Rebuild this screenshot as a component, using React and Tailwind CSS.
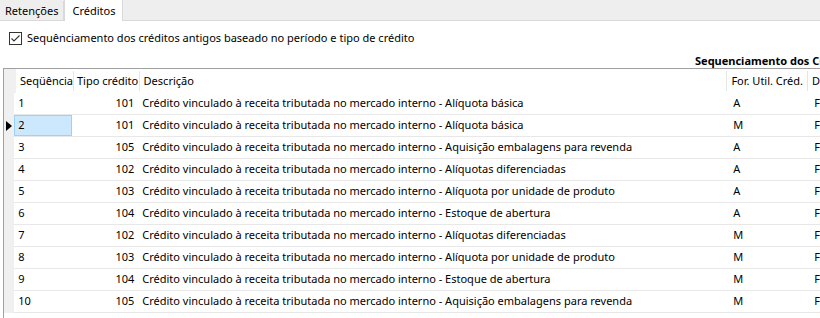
import React from "react";

const rows = [
  { seq: 1, tipo: 101, desc: "Alíquota básica", util: "A" },
  { seq: 2, tipo: 101, desc: "Alíquota básica", util: "M" },
  { seq: 3, tipo: 105, desc: "Aquisição embalagens para revenda", util: "A" },
  { seq: 4, tipo: 102, desc: "Alíquotas diferenciadas", util: "A" },
  { seq: 5, tipo: 103, desc: "Alíquota por unidade de produto", util: "A" },
  { seq: 6, tipo: 104, desc: "Estoque de abertura", util: "A" },
  { seq: 7, tipo: 102, desc: "Alíquotas diferenciadas", util: "M" },
  { seq: 8, tipo: 103, desc: "Alíquota por unidade de produto", util: "M" },
  { seq: 9, tipo: 104, desc: "Estoque de abertura", util: "M" },
  { seq: 10, tipo: 105, desc: "Aquisição embalagens para revenda", util: "M" },
];

const App = () => {
  return (
    <div
      className="w-[820px] h-[318px] overflow-hidden bg-white text-[11px] text-black"
      style={{ fontFamily: '"Noto Sans", "Liberation Sans", sans-serif' }}
    >
      {/* Tabs */}
      <div className="h-[21px] bg-[#eeeeee] border-b border-[#d9d9d9] flex items-end">
        <div className="h-[19px] px-[5px] flex items-center border-r border-[#d9d9d9] leading-none">
          Retenções
        </div>
        <div className="h-[22px] -mb-px px-[7px] flex items-center bg-white border-x border-t border-[#d9d9d9] leading-none">
          Créditos
        </div>
      </div>

      {/* Option */}
      <div className="flex items-center gap-[5px] pl-[9px] mt-[11px] h-[13px]">
        <div className="w-[13px] h-[13px] border border-[#333333] bg-white flex items-center justify-center">
          <svg width="11" height="11" viewBox="0 0 11 11">
            <path d="M1.5 5.5 L4 8 L9.5 2.5" fill="none" stroke="#333333" strokeWidth="1.1" />
          </svg>
        </div>
        <span>Sequênciamento dos créditos antigos baseado no período e tipo de crédito</span>
      </div>

      {/* Band title */}
      <div className="mt-[9px] h-[13px] pl-[695px] whitespace-nowrap font-bold leading-[13px]">
        Sequenciamento dos Créditos
      </div>

      {/* Grid */}
      <div className="mt-[1px] ml-[3px] border-l border-t border-[#a0a0a0] h-[300px]">
        {/* Header */}
        <div className="flex h-[24px] items-center whitespace-nowrap">
          <div className="w-[12px] h-full bg-[#f0f0f0]" />
          <div className="w-[58px] h-[20px] pl-[4px] flex items-center border-r border-[#e5e5e5]">Seqüência</div>
          <div className="w-[66px] h-[20px] pl-[3px] flex items-center border-r border-[#e5e5e5]">Tipo crédito</div>
          <div className="w-[591px] h-[20px] pl-[4px] flex items-center border-r border-[#e5e5e5]">Descrição</div>
          <div className="w-[81px] h-[20px] pl-[4px] flex items-center border-r border-[#e5e5e5] overflow-hidden">For. Util. Créd.</div>
          <div className="pl-[4px]">D</div>
        </div>

        {rows.map((r) => {
          const selected = r.seq === 2;
          return (
            <div key={r.seq} className="flex h-[22px] whitespace-nowrap">
              <div className="w-[12px] h-full bg-[#f0f0f0] flex items-center justify-center">
                {selected && (
                  <svg width="6" height="10" viewBox="0 0 6 10">
                    <path d="M0 0 L6 5 L0 10 Z" fill="#000000" />
                  </svg>
                )}
              </div>
              <div className="flex flex-1 border-b border-[#e8e8e8]">
                <div
                  className={
                    selected
                      ? "w-[58px] pl-[3px] flex items-center bg-[#cce8ff] border border-[#99d1ff]"
                      : "w-[58px] pl-[4px] flex items-center"
                  }
                >
                  {r.seq}
                </div>
                <div className="w-[66px] pr-[4px] flex items-center justify-end">{r.tipo}</div>
                <div className="w-[591px] pl-[4px] flex items-center">
                  Crédito vinculado à receita tributada no mercado interno - {r.desc}
                </div>
                <div className="w-[81px] pl-[4px] flex items-center">{r.util}</div>
                <div className="pl-[4px] flex items-center">F</div>
              </div>
            </div>
          );
        })}
      </div>
    </div>
  );
};

export default App;
